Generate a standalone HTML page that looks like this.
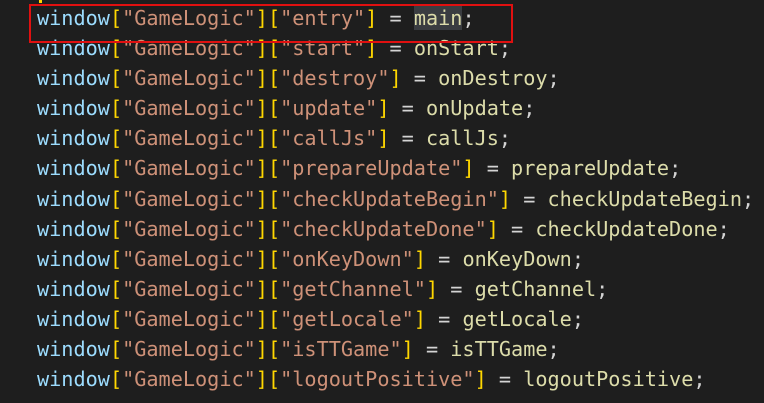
<!DOCTYPE html>
<html><head><style>
html,body{margin:0;padding:0;background:#1e1e1e;width:764px;height:403px;overflow:hidden}
.c{position:absolute;left:37px;top:3px;font-family:"DejaVu Sans Mono","Liberation Mono",monospace;font-size:20.2px;line-height:30.1px;white-space:pre;color:#d4d4d4}
.w{color:#9cdcfe}.b{color:#ffd700}.s{color:#ce9178}.f{color:#dcdcaa}
.box{position:absolute;left:29px;top:4px;width:480px;height:35px;border:2px solid #e01010}
.hl{background:#3a3d41}
.top{position:absolute;left:39px;top:0;width:3px;height:3px;background:#ffd700}
</style></head><body>
<div class="top"></div>
<div class="c"><span class="w">window</span><span class="b">[</span><span class="s">"GameLogic"</span><span class="b">][</span><span class="s">"entry"</span><span class="b">]</span> = <span class="f hl">main</span>;
<span class="w">window</span><span class="b">[</span><span class="s">"GameLogic"</span><span class="b">][</span><span class="s">"start"</span><span class="b">]</span> = <span class="f">onStart</span>;
<span class="w">window</span><span class="b">[</span><span class="s">"GameLogic"</span><span class="b">][</span><span class="s">"destroy"</span><span class="b">]</span> = <span class="f">onDestroy</span>;
<span class="w">window</span><span class="b">[</span><span class="s">"GameLogic"</span><span class="b">][</span><span class="s">"update"</span><span class="b">]</span> = <span class="f">onUpdate</span>;
<span class="w">window</span><span class="b">[</span><span class="s">"GameLogic"</span><span class="b">][</span><span class="s">"callJs"</span><span class="b">]</span> = <span class="f">callJs</span>;
<span class="w">window</span><span class="b">[</span><span class="s">"GameLogic"</span><span class="b">][</span><span class="s">"prepareUpdate"</span><span class="b">]</span> = <span class="f">prepareUpdate</span>;
<span class="w">window</span><span class="b">[</span><span class="s">"GameLogic"</span><span class="b">][</span><span class="s">"checkUpdateBegin"</span><span class="b">]</span> = <span class="f">checkUpdateBegin</span>;
<span class="w">window</span><span class="b">[</span><span class="s">"GameLogic"</span><span class="b">][</span><span class="s">"checkUpdateDone"</span><span class="b">]</span> = <span class="f">checkUpdateDone</span>;
<span class="w">window</span><span class="b">[</span><span class="s">"GameLogic"</span><span class="b">][</span><span class="s">"onKeyDown"</span><span class="b">]</span> = <span class="f">onKeyDown</span>;
<span class="w">window</span><span class="b">[</span><span class="s">"GameLogic"</span><span class="b">][</span><span class="s">"getChannel"</span><span class="b">]</span> = <span class="f">getChannel</span>;
<span class="w">window</span><span class="b">[</span><span class="s">"GameLogic"</span><span class="b">][</span><span class="s">"getLocale"</span><span class="b">]</span> = <span class="f">getLocale</span>;
<span class="w">window</span><span class="b">[</span><span class="s">"GameLogic"</span><span class="b">][</span><span class="s">"isTTGame"</span><span class="b">]</span> = <span class="f">isTTGame</span>;
<span class="w">window</span><span class="b">[</span><span class="s">"GameLogic"</span><span class="b">][</span><span class="s">"logoutPositive"</span><span class="b">]</span> = <span class="f">logoutPositive</span>;</div>
<div class="box"></div>
</body></html>
